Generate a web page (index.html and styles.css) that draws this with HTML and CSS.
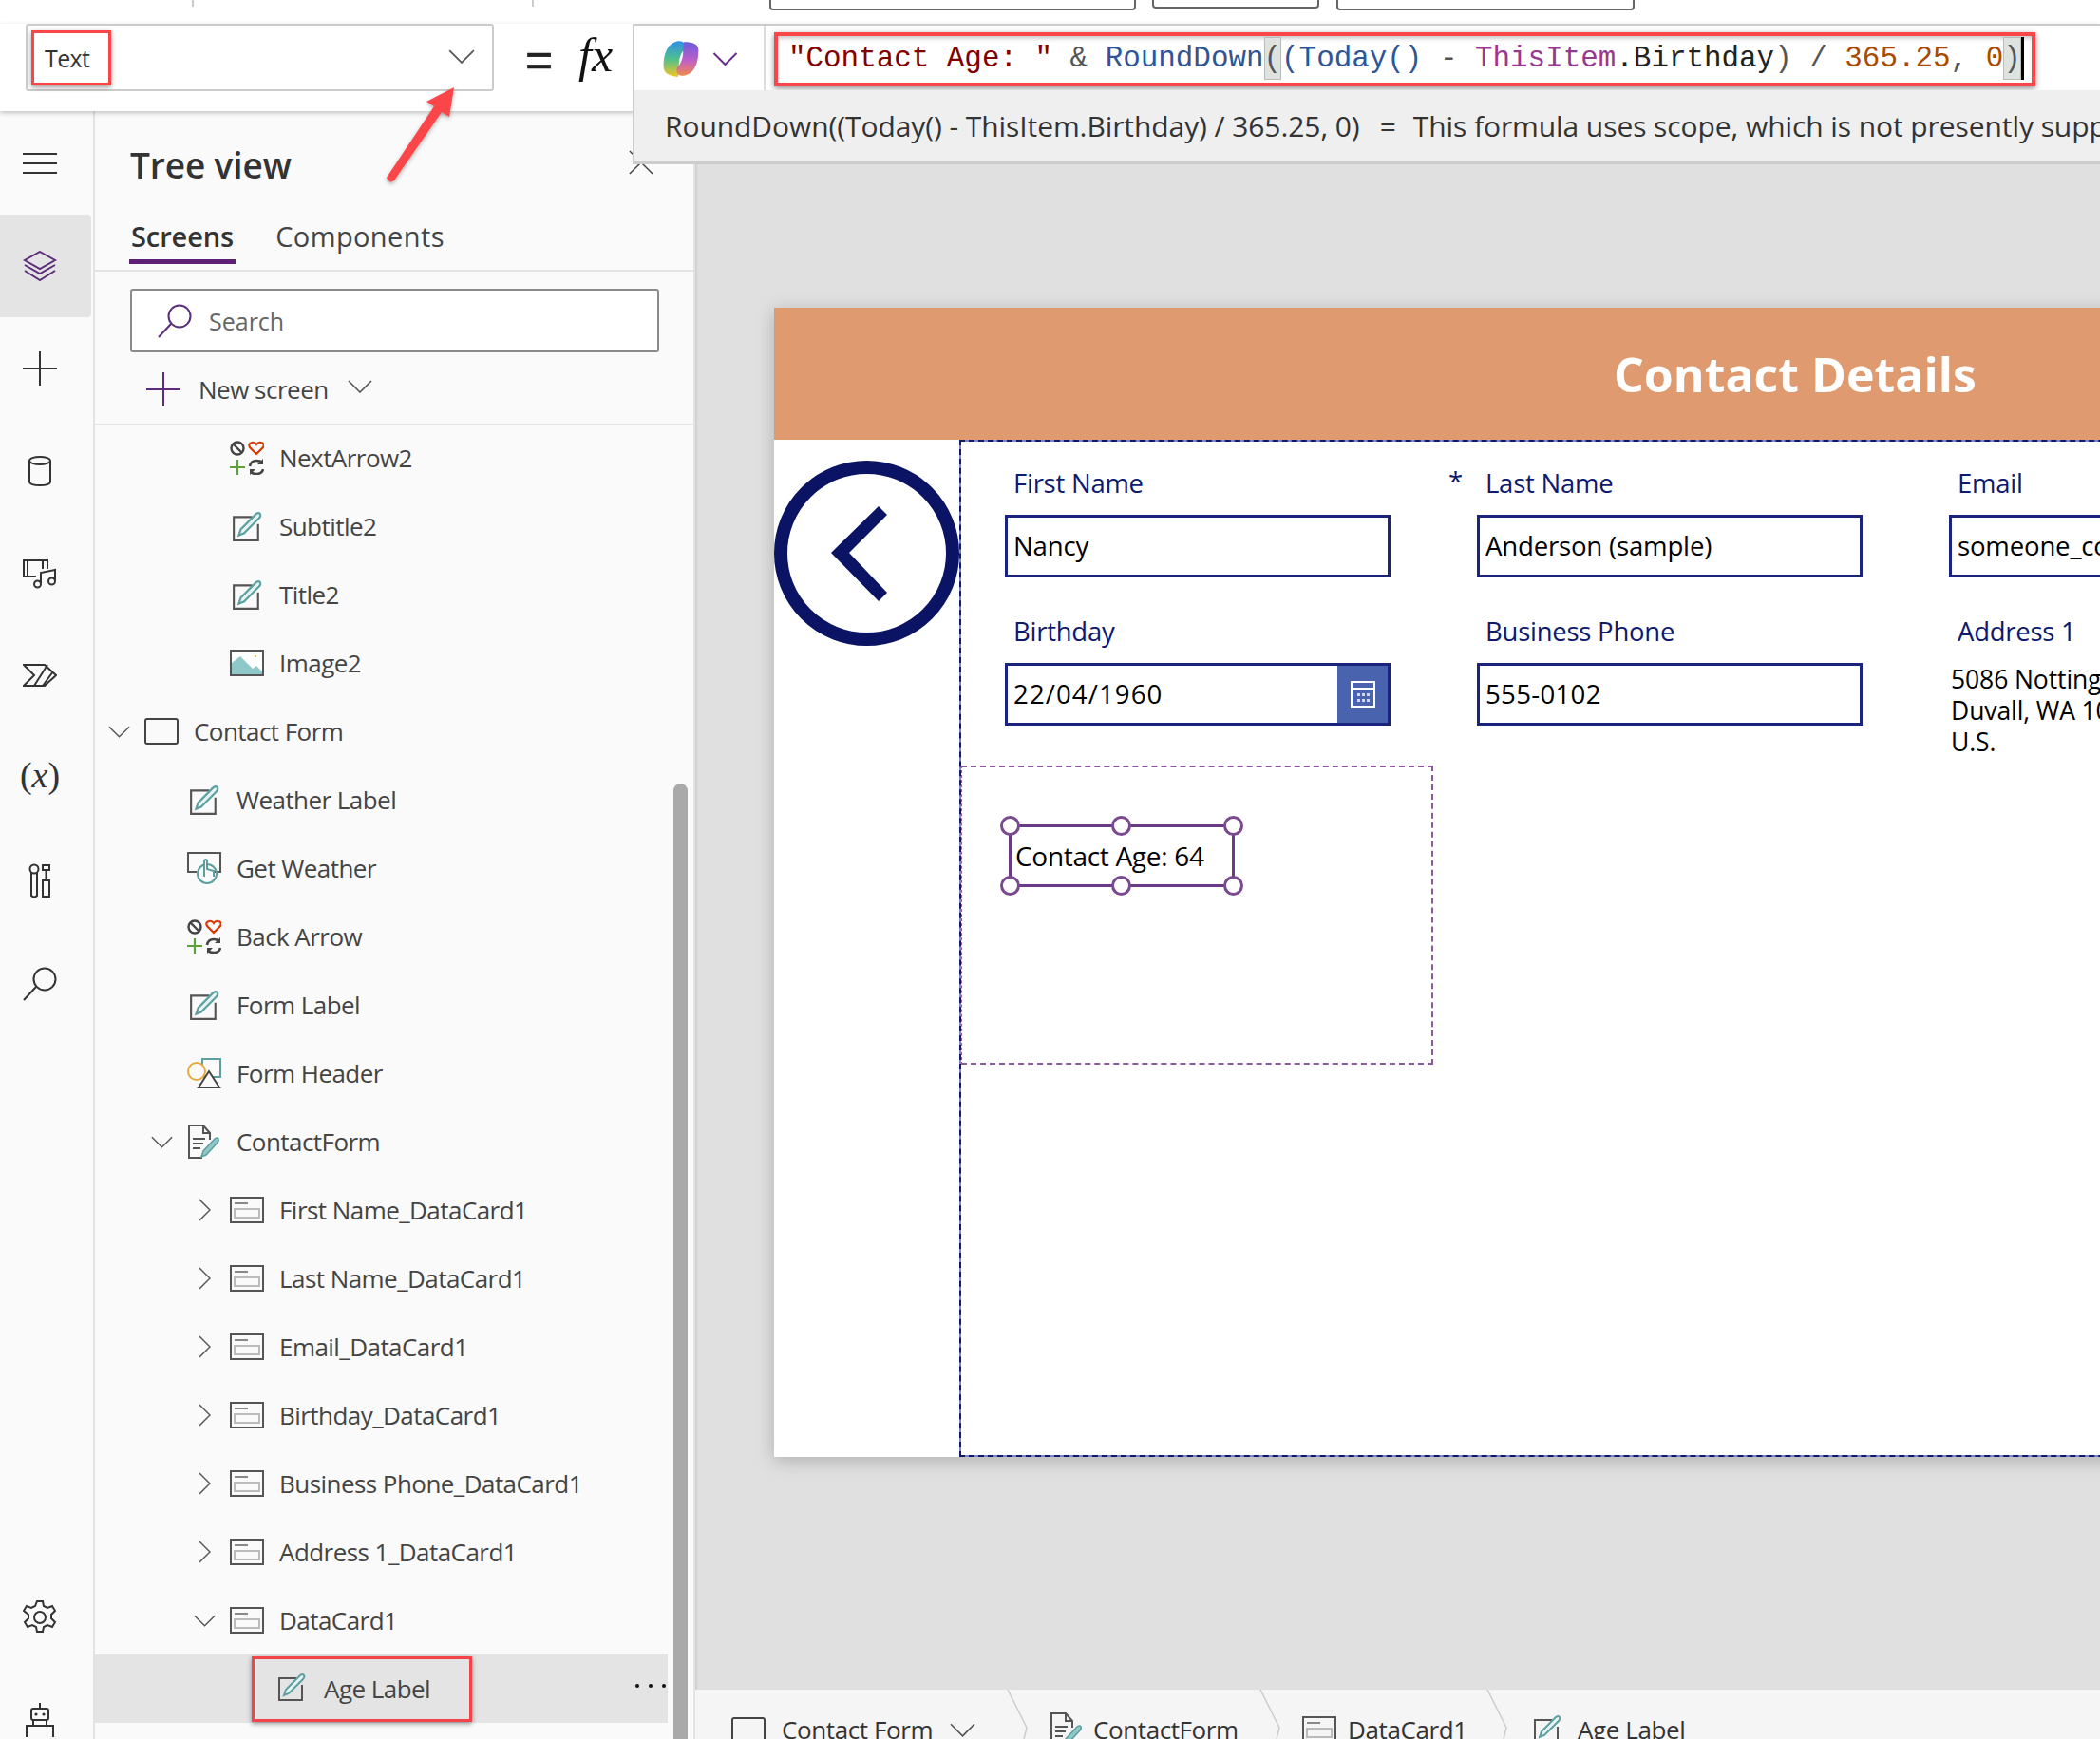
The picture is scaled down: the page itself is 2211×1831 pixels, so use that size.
FILE: index.html
```html
<!DOCTYPE html>
<html lang="en">
<head>
<meta charset="utf-8">
<title>Tree view</title>
<link rel="stylesheet" href="styles.css">
</head>
<body>
<svg class="defs" aria-hidden="true">
  <defs>
    <linearGradient id="cpA" x1="0" y1="0" x2="0" y2="1"><stop offset="0" stop-color="#2f8fe8"/><stop offset=".5" stop-color="#4fc08d"/><stop offset="1" stop-color="#f3c623"/></linearGradient>
    <linearGradient id="cpB" x1="0" y1="0" x2="0" y2="1"><stop offset="0" stop-color="#6a5be0"/><stop offset=".55" stop-color="#c05fc8"/><stop offset="1" stop-color="#f08a4b"/></linearGradient>
  </defs>
  <symbol id="i-edit" viewBox="0 0 30 30">
    <path d="M20 6H2v23h24V13" fill="none" stroke="#555" stroke-width="2"/>
    <path d="M7 24l2-6L24 3q3-2 4 0t-1 4L12 22z" fill="#e6f3f3" stroke="#5c9fa0" stroke-width="2"/>
  </symbol>
  <symbol id="i-card" viewBox="0 0 36 28">
    <rect x="1" y="1" width="34" height="26" fill="none" stroke="#555" stroke-width="2"/>
    <rect x="5" y="6" width="14" height="2" fill="#888"/>
    <rect x="5" y="13" width="26" height="9" fill="none" stroke="#bbb" stroke-width="2"/>
  </symbol>
  <symbol id="i-ctl" viewBox="0 0 36 36">
    <circle cx="8" cy="8" r="6.5" fill="none" stroke="#444" stroke-width="2.4"/>
    <path d="M4 4l8 8" stroke="#444" stroke-width="2.4"/>
    <path d="M28 14l-7-7q-2-4 2-5 3-1 5 2 2-3 5-2 4 1 2 5z" fill="none" stroke="#d83b01" stroke-width="2.2"/>
    <path d="M8 20v16M0 28h16" stroke="#5ea13a" stroke-width="2.2"/>
    <path d="M21 27q1-6 7-6 4 0 6 2M35 30q-1 5-7 5-4 0-6-2" fill="none" stroke="#444" stroke-width="2.6"/>
    <path d="M35 19v6h-6M21 36v-6h6" fill="#444"/>
  </symbol>
  <symbol id="i-image" viewBox="0 0 36 28">
    <rect x="1" y="1" width="34" height="26" fill="#fff" stroke="#555" stroke-width="2"/>
    <path d="M2 26V14l9-7 13 13 4-3 6 6v3z" fill="#8fc8c8"/>
    <circle cx="27" cy="7" r="1" fill="#e6a61c"/>
  </symbol>
  <symbol id="i-screen" viewBox="0 0 36 28">
    <rect x="1" y="1" width="34" height="26" rx="2" fill="none" stroke="#444" stroke-width="2"/>
  </symbol>
  <symbol id="i-button" viewBox="0 0 36 34">
    <path d="M10 21H1V1h34v20h-8" fill="none" stroke="#555" stroke-width="2"/>
    <circle cx="21" cy="23" r="10" fill="none" stroke="#5c9fa0" stroke-width="2"/>
    <path d="M18 26V9q2-2 3 0v9l7 2v6" fill="#fafafa" stroke="#5c9fa0" stroke-width="2"/>
  </symbol>
  <symbol id="i-header" viewBox="0 0 36 32">
    <rect x="16" y="1" width="19" height="19" fill="none" stroke="#5c9fa0" stroke-width="2"/>
    <circle cx="10" cy="14" r="9" fill="#fafafa" stroke="#e6a93a" stroke-width="2"/>
    <path d="M12 31l11-17 11 17z" fill="#fafafa" stroke="#444" stroke-width="2"/>
  </symbol>
  <symbol id="i-form" viewBox="0 0 34 36">
    <path d="M15 35H1V1h15l7 8v7M16 1v8h7" fill="none" stroke="#555" stroke-width="2"/>
    <path d="M5 15h13M5 20h11M5 25h8" stroke="#555" stroke-width="2"/>
    <path d="M14 34l2-6 12-13q3-2 4 0t-1 4L19 32z" fill="#8fc8c8" stroke="#5c9fa0" stroke-width="1.5"/>
  </symbol>
  <symbol id="c-down" viewBox="0 0 26 14"><path d="M1 1l12 12L25 1" fill="none" stroke="#555" stroke-width="1.6"/></symbol>
  <symbol id="c-right" viewBox="0 0 14 26"><path d="M1 1l12 12L1 25" fill="none" stroke="#555" stroke-width="1.6"/></symbol>
  <symbol id="c-crumb" viewBox="0 0 24 52"><path d="M1 0l20 40-3 12" fill="none" stroke="#ccc" stroke-width="1.5"/></symbol>
</svg>

<div class="strip">
  <span class="tick tick-a"></span><span class="tick tick-b"></span>
  <span class="stub stub-a"></span><span class="stub stub-b"></span><span class="stub stub-c"></span>
</div>

<header class="fbar">
  <div class="prop">
    <span class="prop-name">Text</span>
    <svg class="prop-chev"><use href="#c-down"/></svg>
  </div>
  <span class="eq">=</span>
  <span class="fx">fx</span>
  <div class="formula">
    <div class="copilot">
      <svg class="cp-logo" viewBox="0 0 40 38">
        <path d="M3 27C3 14 7 3 18 2c5 0 7 3 6 8-3 2-6 8-6 15 0 5 0 10-1 12C8 36 3 33 3 27z" fill="url(#cpA)"/>
        <path d="M37 11c0 13-4 24-15 25-5 0-7-3-6-8 3-2 6-8 6-15 0-5 0-8 1-10 9 0 14 2 14 8z" fill="url(#cpB)"/>
      </svg>
      <svg class="cp-chev" viewBox="0 0 26 14"><path d="M1 1l12 12L25 1" fill="none" stroke="#6b2d8b" stroke-width="2"/></svg>
    </div>
    <div class="editor"><span class="t-str">"Contact Age: "</span><span class="t-op"> &amp; </span><span class="t-fn">RoundDown</span><span class="t-br">(</span><span class="t-fn">(Today() </span><span class="t-op">- </span><span class="t-this">ThisItem</span><span class="t-id">.Birthday</span><span class="t-op">) / </span><span class="t-num">365.25</span><span class="t-op">, </span><span class="t-num">0</span><span class="t-br t-end">)</span></div>
  </div>
  <div class="suggest">RoundDown((Today() - ThisItem.Birthday) / 365.25, 0)<span class="sg-eq">=</span>This formula uses scope, which is not presently supp</div>
</header>

<svg class="callout" viewBox="0 0 90 110" aria-hidden="true">
  <path d="M78 5L73 36 65 31 15 103Q10 107 7 100L57 25 49 20Z" fill="#fa4549"/>
</svg>

<div class="main">
  <nav class="rail">
    <div class="rail-item"><svg viewBox="0 0 36 24"><path d="M0 2h36M0 12h36M0 22h36" stroke="#333" stroke-width="2"/></svg></div>
    <div class="rail-item is-active"><svg viewBox="0 0 36 32"><path d="M18 1l16 9-16 9-16-9zM2 15l16 9 16-9M2 21l16 10 16-10" fill="none" stroke="#5c2d7a" stroke-width="2"/></svg></div>
    <div class="rail-item"><svg viewBox="0 0 36 36"><path d="M18 0v36M0 18h36" stroke="#333" stroke-width="2"/></svg></div>
    <div class="rail-item"><svg class="r-db" viewBox="0 0 24 32"><ellipse cx="12" cy="5" rx="11" ry="4" fill="none" stroke="#333" stroke-width="2"/><path d="M1 5v22q0 4 11 4t11-4V5" fill="none" stroke="#333" stroke-width="2"/></svg></div>
    <div class="rail-item"><svg viewBox="0 0 36 32"><path d="M14 19H1V2h25v9M5 2v17M21 2v9" fill="none" stroke="#333" stroke-width="2"/><path d="M19 26V15l15-3v11" fill="none" stroke="#333" stroke-width="2"/><circle cx="15.500" cy="27" r="3.500" fill="none" stroke="#333" stroke-width="2"/><circle cx="30.500" cy="24" r="3.500" fill="none" stroke="#333" stroke-width="2"/></svg></div>
    <div class="rail-item r-pa"><svg viewBox="0 0 36 24"><path d="M1 1h22l12 11-12 11H1l11-11zM12 23l14-22M21 23l11-15" fill="none" stroke="#333" stroke-width="2"/></svg></div>
    <div class="rail-item rail-var">(<i>x</i>)</div>
    <div class="rail-item"><svg class="r-tools" viewBox="0 0 24 38"><circle cx="6" cy="6" r="4.500" fill="none" stroke="#333" stroke-width="2"/><path d="M3 10v24q3 3 6 0V10M15 2h7v5h-7zM18.500 7v11M14 18h9M15 18v17h7V18" fill="none" stroke="#333" stroke-width="2"/></svg></div>
    <div class="rail-item"><svg viewBox="0 0 36 36"><circle cx="23" cy="13" r="11.500" fill="none" stroke="#333" stroke-width="2"/><path d="M14 21L1 35" stroke="#333" stroke-width="2"/></svg></div>
    <div class="rail-item rail-gear"><svg viewBox="0 0 36 36"><path d="M15 1h6l1 5 4 2 5-2 3 5-4 4v4l4 4-3 5-5-2-4 2-1 5h-6l-1-5-4-2-5 2-3-5 4-4v-4L1 11l3-5 5 2 4-2z" fill="none" stroke="#333" stroke-width="2"/><circle cx="18" cy="18" r="6" fill="none" stroke="#333" stroke-width="2"/></svg></div>
    <div class="rail-item"><svg class="r-bot" viewBox="0 0 30 36"><path d="M15 0v5" stroke="#333" stroke-width="2"/><rect x="6" y="6" width="18" height="12" rx="2" fill="none" stroke="#333" stroke-width="2"/><path d="M1 36V24h28v12M8 18v6M22 18v6" fill="none" stroke="#333" stroke-width="2"/><circle cx="11" cy="12" r="1.600" fill="#333"/><circle cx="19" cy="12" r="1.600" fill="#333"/></svg></div>
  </nav>

  <aside class="panel">
    <div class="panel-head">
      <h1 class="panel-title">Tree view</h1>
      <svg class="panel-close" viewBox="0 0 28 28"><path d="M1 1l26 26M27 1L1 27" stroke="#444" stroke-width="1.6"/></svg>
    </div>
    <div class="tabs">
      <span class="tab is-on">Screens</span>
      <span class="tab">Components</span>
    </div>
    <div class="search">
      <svg class="search-ic" viewBox="0 0 36 36"><circle cx="23" cy="13" r="11.500" fill="none" stroke="#5c2d7a" stroke-width="2"/><path d="M14 21L1 35" stroke="#5c2d7a" stroke-width="2"/></svg>
      <span>Search</span>
    </div>
    <div class="newscreen">
      <svg class="ns-plus" viewBox="0 0 36 36"><path d="M18 0v36M0 18h36" stroke="#5c2d7a" stroke-width="2"/></svg>
      <span>New screen</span>
      <svg class="ns-chev"><use href="#c-down"/></svg>
    </div>
    <ul class="tree">
      <li class="row lv2"><span class="slot"></span><svg class="ic ic-l"><use href="#i-ctl"/></svg><span>NextArrow2</span></li>
      <li class="row lv2"><span class="slot"></span><svg class="ic"><use href="#i-edit"/></svg><span>Subtitle2</span></li>
      <li class="row lv2"><span class="slot"></span><svg class="ic"><use href="#i-edit"/></svg><span>Title2</span></li>
      <li class="row lv2"><span class="slot"></span><svg class="ic"><use href="#i-image"/></svg><span>Image2</span></li>
      <li class="row lv0"><span class="slot"><svg class="cd"><use href="#c-down"/></svg></span><svg class="ic"><use href="#i-screen"/></svg><span>Contact Form</span></li>
      <li class="row lv1"><span class="slot"></span><svg class="ic"><use href="#i-edit"/></svg><span>Weather Label</span></li>
      <li class="row lv1"><span class="slot"></span><svg class="ic ic-l"><use href="#i-button"/></svg><span>Get Weather</span></li>
      <li class="row lv1"><span class="slot"></span><svg class="ic ic-l"><use href="#i-ctl"/></svg><span>Back Arrow</span></li>
      <li class="row lv1"><span class="slot"></span><svg class="ic"><use href="#i-edit"/></svg><span>Form Label</span></li>
      <li class="row lv1"><span class="slot"></span><svg class="ic"><use href="#i-header"/></svg><span>Form Header</span></li>
      <li class="row lv1"><span class="slot"><svg class="cd"><use href="#c-down"/></svg></span><svg class="ic ic-l"><use href="#i-form"/></svg><span>ContactForm</span></li>
      <li class="row lv2"><span class="slot"><svg class="cr"><use href="#c-right"/></svg></span><svg class="ic"><use href="#i-card"/></svg><span>First Name_DataCard1</span></li>
      <li class="row lv2"><span class="slot"><svg class="cr"><use href="#c-right"/></svg></span><svg class="ic"><use href="#i-card"/></svg><span>Last Name_DataCard1</span></li>
      <li class="row lv2"><span class="slot"><svg class="cr"><use href="#c-right"/></svg></span><svg class="ic"><use href="#i-card"/></svg><span>Email_DataCard1</span></li>
      <li class="row lv2"><span class="slot"><svg class="cr"><use href="#c-right"/></svg></span><svg class="ic"><use href="#i-card"/></svg><span>Birthday_DataCard1</span></li>
      <li class="row lv2"><span class="slot"><svg class="cr"><use href="#c-right"/></svg></span><svg class="ic"><use href="#i-card"/></svg><span>Business Phone_DataCard1</span></li>
      <li class="row lv2"><span class="slot"><svg class="cr"><use href="#c-right"/></svg></span><svg class="ic"><use href="#i-card"/></svg><span>Address 1_DataCard1</span></li>
      <li class="row lv2"><span class="slot"><svg class="cd"><use href="#c-down"/></svg></span><svg class="ic"><use href="#i-card"/></svg><span>DataCard1</span></li>
      <li class="row row-sel">
        <div class="sel-box"><svg class="ic-edit"><use href="#i-edit"/></svg><span>Age Label</span></div>
        <span class="dots"><i></i><i></i><i></i></span>
      </li>
    </ul>
    <div class="scrollbar"></div>
  </aside>

  <section class="work">
    <div class="canvas">
      <div class="card">
        <div class="card-head"><span>Contact Details</span></div>
        <div class="card-body">
          <div class="back">
            <svg viewBox="0 0 195 195"><circle cx="97.500" cy="97.500" r="90.500" fill="none" stroke="#0b1464" stroke-width="14"/><path d="M60 97l50-49 9 9-40 40 40 42-9 9z" fill="#0b1464"/></svg>
          </div>
          <div class="form">
            <div class="field"><label class="lab">First Name</label><div class="input">Nancy</div></div>
            <div class="field"><label class="lab"><b class="req">*</b>Last Name</label><div class="input">Anderson (sample)</div></div>
            <div class="field"><label class="lab">Email</label><div class="input">someone_contoso.com</div></div>
            <div class="field"><label class="lab">Birthday</label>
              <div class="input input-date"><span class="num">22/04/1960</span>
                <span class="cal"><svg viewBox="0 0 26 28"><rect x="1" y="1" width="24" height="26" fill="none" stroke="#fff" stroke-width="2"/><path d="M1 8h24" stroke="#fff" stroke-width="2"/><path d="M7 13h3v3H7zM12 13h3v3h-3zM17 13h3v3h-3zM7 19h3v3H7zM12 19h3v3h-3zM17 19h3v3h-3z" fill="#cfd6ee"/></svg></span>
              </div>
            </div>
            <div class="field"><label class="lab">Business Phone</label><div class="input"><span class="num2">555-0102</span></div></div>
            <div class="field"><label class="lab">Address 1</label><div class="addr">5086 Nottingham Place<br>Duvall, WA 10348<br>U.S.</div></div>
            <div class="datacard">
              <div class="age">Contact Age: 64
                <i class="h h-tl"></i><i class="h h-tm"></i><i class="h h-tr"></i>
                <i class="h h-bl"></i><i class="h h-bm"></i><i class="h h-br"></i>
              </div>
            </div>
          </div>
        </div>
      </div>
    </div>
    <footer class="status">
      <div class="crumb cr-1"><svg class="b-screen"><use href="#i-screen"/></svg><span>Contact Form</span><svg class="b-chev"><use href="#c-down"/></svg></div>
      <svg class="sep"><use href="#c-crumb"/></svg>
      <div class="crumb cr-2"><svg class="b-form"><use href="#i-form"/></svg><span>ContactForm</span></div>
      <svg class="sep"><use href="#c-crumb"/></svg>
      <div class="crumb cr-3"><svg class="b-card"><use href="#i-card"/></svg><span>DataCard1</span></div>
      <svg class="sep"><use href="#c-crumb"/></svg>
      <div class="crumb cr-4"><svg class="b-edit"><use href="#i-edit"/></svg><span>Age Label</span></div>
    </footer>
  </section>
</div>
</body>
</html>
```
FILE: styles.css
```css
* { box-sizing: border-box; }
html, body { margin: 0; padding: 0; }
body {
  width: 2211px; height: 1831px; overflow: hidden; position: relative;
  display: flex; flex-direction: column;
  background: #fff; color: #333;
  font-family: "Open Sans", "Noto Sans", sans-serif;
}
.defs { position: absolute; width: 0; height: 0; }

/* top strip */
.strip { height: 25px; flex: none; position: relative; background: #fff; }
.tick { position: absolute; top: 0; width: 2px; height: 7px; background: #ccc; }
.tick-a { left: 202px; } .tick-b { left: 560px; }
.stub { position: absolute; top: -6px; height: 17px; background: #fff; border: 2px solid #666; border-radius: 4px; }
.stub-a { left: 810px; width: 386px; }
.stub-b { left: 1213px; width: 176px; height: 15px; }
.stub-c { left: 1407px; width: 314px; }

/* formula bar */
.fbar {
  height: 92px; flex: none; position: relative; z-index: 5;
  display: flex; align-items: flex-start;
  background: #fff; box-shadow: 0 2px 5px rgba(0,0,0,.22);
}
.prop {
  width: 493px; height: 71px; margin-left: 27px; flex: none;
  display: flex; align-items: center; justify-content: space-between;
  border: 2px solid #ccc; border-radius: 3px; padding-right: 18px; padding-left: 4px;
}
.prop-name {
  width: 84px; height: 58px; line-height: 52px; padding-left: 11px;
  font-size: 25px; letter-spacing: -.6px; color: #333;
  border: 3px solid #fa4549; box-shadow: 0 2px 5px rgba(0,0,0,.4);
}
.prop-chev { width: 28px; height: 15px; margin-bottom: 2px; }
.eq { width: 33px; margin-left: 33px; margin-top: 8px; font: 50px/60px "Liberation Sans", sans-serif; color: #222; -webkit-text-stroke: .6px #222; }
.fx {
  margin-left: 23px; margin-top: 3px; width: 57px;
  font: italic 50px/60px "Liberation Serif", serif; color: #111;
}
.formula {
  flex: 1; height: 72px; display: flex;
  border-top: 2px solid #ccc; border-bottom: 2px solid #ccc; border-left: 2px solid #ccc;
}
.copilot { width: 138px; flex: none; display: flex; align-items: center; padding-left: 27px; border-right: 2px solid #ddd; }
.cp-logo { width: 44px; height: 41px; }
.cp-chev { width: 27px; height: 14px; margin-left: 11px; margin-top: 2px; }
.editor {
  width: 1328px; height: 57px; margin: 7px 0 0 9px;
  padding-left: 11px; border: 4px solid #fa4549;
  box-shadow: 0 2px 6px rgba(0,0,0,.45), inset 0 4px 5px -2px rgba(0,0,0,.25);
  font: 30.900px/47px "Liberation Mono", monospace; white-space: pre;
}
.t-str { color: #800000; } .t-op { color: #555; } .t-fn { color: #2f5597; }
.t-this { color: #953a8f; } .t-id { color: #222; } .t-num { color: #a84b00; }
.t-br { color: #555; background: #dfe3df; box-shadow: inset 0 0 0 1px #b9bdb9; display: inline-block; line-height: 45px; }
.t-end { border-right: 3px solid #000; }
.suggest {
  position: absolute; left: 666px; right: 0; top: 70px; height: 78px;
  padding-left: 32px; line-height: 76px; white-space: nowrap; overflow: hidden;
  background: #efefef; color: #333; font-size: 30px; letter-spacing: -.08px;
  border-left: 2px solid #ccc; border-bottom: 3px solid #ccc;
}
.sg-eq { margin: 0 18px 0 21px; }
.callout {
  position: absolute; left: 400px; top: 87px; width: 90px; height: 110px; z-index: 6;
  filter: drop-shadow(0 2px 2px rgba(0,0,0,.3));
}

/* main */
.main { flex: 1; min-height: 0; display: flex; overflow: hidden; }
.rail { width: 100px; flex: none; padding-right: 3px; padding-top: 1px; background: #fafafa; border-right: 2px solid #e3e3e3; display: flex; flex-direction: column; }
.rail-item { height: 108px; flex: none; width: 96px; padding-right: 12px; display: flex; align-items: center; justify-content: center; }
.rail-item svg { width: 36px; max-height: 38px; }
.rail-item svg.r-db { width: 24px; height: 32px; }
.rail-item svg.r-tools { width: 24px; height: 38px; }
.rail-item svg.r-bot { width: 30px; height: 36px; }
.rail-item.is-active { background: #e4e4e4; border-radius: 0 4px 4px 0; }
.r-pa { padding-bottom: 2px; }
.rail-var { font: 38px "Liberation Serif", serif; color: #333; padding-bottom: 8px; }
.rail-gear { margin-top: 559px; }

/* panel */
.panel { width: 632px; flex: none; position: relative; background: #fafafa; border-right: 2px solid #e3e3e3; overflow: hidden; }
.panel-head { height: 84px; padding: 30px 42px 0 37px; display: flex; justify-content: space-between; }
.panel-title { margin: 0; font-size: 37px; line-height: 54px; font-weight: 600; color: #333; letter-spacing: -.1px; }
.panel-close { width: 26px; height: 26px; margin-top: 11px; }
.tabs { height: 85px; padding: 28px 0 0 36px; display: flex; gap: 40px; border-bottom: 2px solid #e3e3e3; }
.tab { height: 49px; line-height: 40px; padding: 0 2px; font-size: 29px; letter-spacing: .4px; color: #444; }
.tab.is-on { font-weight: 600; color: #333; border-bottom: 5px solid #5c2175; letter-spacing: -.1px; }
.search {
  width: 557px; height: 67px; margin: 18px 0 0 37px; background: #fff;
  display: flex; align-items: center; gap: 18px; padding-left: 27px;
  border: 2px solid #8a8a8a; border-radius: 3px; font-size: 25px; color: #666;
}
.search-ic { width: 36px; height: 36px; }
.newscreen { height: 77px; padding-left: 54px; padding-top: 3px; display: flex; align-items: center; border-bottom: 2px solid #e3e3e3; font-size: 26px; letter-spacing: -.5px; color: #444; }
.ns-plus { width: 36px; height: 36px; margin-right: 19px; }
.ns-chev { width: 26px; height: 14px; margin-left: 20px; margin-bottom: 6px; }
.tree { list-style: none; margin: -2px 0 0; padding: 0; width: 603px; }
.row { height: 72px; display: flex; align-items: center; font-size: 26px; letter-spacing: -.55px; color: #444; white-space: nowrap; }
.lv0 { padding-left: 7px; } .lv1 { padding-left: 52px; } .lv2 { padding-left: 97px; }
.slot { width: 45px; flex: none; padding-right: 9px; display: flex; justify-content: center; align-items: center; }
.cd { width: 23px; height: 13px; }
.cr { width: 13px; height: 24px; }
.ic { width: 36px; height: 32px; flex: none; margin-right: 16px; }
.ic.ic-l { height: 36px; }
.row-sel { height: 72px; background: #e4e4e4; position: relative; }
.sel-box {
  width: 232px; height: 69px; margin-left: 165px; padding-left: 24px;
  display: flex; align-items: center;
  border: 3px solid #f2444a; box-shadow: 0 2px 5px rgba(0,0,0,.4);
}
.ic-edit { width: 30px; height: 30px; margin-right: 19px; margin-top: -5px; }
.dots { position: absolute; left: 569px; top: 31px; display: flex; gap: 10px; }
.dots i { width: 4px; height: 4px; background: #111; border-radius: 50%; }
.scrollbar { position: absolute; left: 609px; top: 708px; width: 15px; height: 1100px; background: #a9a9a9; border-radius: 8px; }

/* workspace */
.work { flex: 1; min-width: 0; display: flex; flex-direction: column; }
.canvas { flex: 1; min-height: 0; background: #e0e0e0; padding: 207px 0 0 83px; overflow: hidden; box-shadow: inset 3px 0 3px -2px rgba(0,0,0,.12); }
.card { width: 1500px; height: 1210px; background: #fff; box-shadow: 0 4px 18px rgba(0,0,0,.22); display: flex; flex-direction: column; }
.card-head { height: 139px; flex: none; background: #e09a70; padding-left: 884px; display: flex; align-items: center; color: #fff; font-size: 50px; font-weight: 700; }
.card-body { flex: 1; display: flex; min-height: 0; }
.back { width: 195px; flex: none; padding-top: 22px; }
.back svg { width: 195px; height: 195px; display: block; }
.form {
  flex: 1; padding-top: 23px; border: 2px dashed #0d1a6e;
  background: linear-gradient(#fff, #fff) padding-box, #7e85bd border-box;
  display: grid; grid-template-columns: repeat(3, 497px); grid-auto-rows: min-content; row-gap: 36px;
}
.field { padding-left: 46px; }
.lab { display: block; position: relative; height: 44px; line-height: 42px; margin-bottom: 10px; padding-left: 9px; color: #0d1a6e; font-size: 27.500px; letter-spacing: -.25px; }
.req { position: absolute; left: -30px; top: -2px; font-weight: 400; }
.input { width: 406px; height: 66px; padding-left: 6px; border: 3px solid #1a237e; font-size: 27.600px; line-height: 59px; color: #000; letter-spacing: -.2px; white-space: nowrap; overflow: hidden; }
.input-date { display: flex; justify-content: space-between; padding-right: 0; }
.num { letter-spacing: 1.100px; }
.num2 { letter-spacing: .3px; }
.cal { width: 53px; background: #4a63ae; display: flex; align-items: center; justify-content: center; }
.cal svg { width: 26px; height: 28px; }
.addr { height: 66px; padding-top: 1px; font-size: 26.500px; line-height: 33px; margin-left: 2px; color: #000; letter-spacing: -.1px; white-space: nowrap; }
.datacard { height: 315px; margin-top: 6px; padding: 60px 0 0 49px; border: 2px dashed #8a5a9f; border-left-width: 1px; }
.age { position: relative; width: 238px; height: 66px; padding-left: 4px; line-height: 60px; border: 3px solid #6b3a87; font-size: 28px; letter-spacing: -.3px; color: #000; white-space: nowrap; }
.h { position: absolute; width: 21px; height: 21px; background: #fff; border: 3px solid #7a4a8f; border-radius: 50%; }
.h-tl { left: -12px; top: -12px; } .h-tm { left: 105px; top: -12px; } .h-tr { right: -12px; top: -12px; }
.h-bl { left: -12px; bottom: -12px; } .h-bm { left: 105px; bottom: -12px; } .h-br { right: -12px; bottom: -12px; }

/* breadcrumb */
.status { height: 52px; flex: none; background: #f5f5f5; display: flex; align-items: flex-start; overflow: hidden; font-size: 26px; color: #333; letter-spacing: -.4px; }
.crumb { display: flex; align-items: flex-start; padding-top: 23px; line-height: 38px; white-space: nowrap; }
.cr-1 { width: 328px; padding-left: 38px; }
.cr-2 { width: 242px; padding-left: 22px; }
.cr-3 { width: 215px; padding-left: 21px; }
.cr-4 { padding-left: 25px; }
.sep { width: 24px; height: 52px; flex: none; }
.crumb svg { flex: none; }
.b-screen { width: 36px; height: 30px; margin: 5px 17px 0 0; }
.b-chev { width: 27px; height: 15px; margin: 12px 0 0 18px; }
.b-form { width: 34px; height: 36px; margin: 1px 11px 0 0; }
.b-card { width: 36px; height: 28px; margin: 5px 12px 0 0; }
.b-edit { width: 30px; height: 30px; margin: 3px 17px 0 0; }
```
